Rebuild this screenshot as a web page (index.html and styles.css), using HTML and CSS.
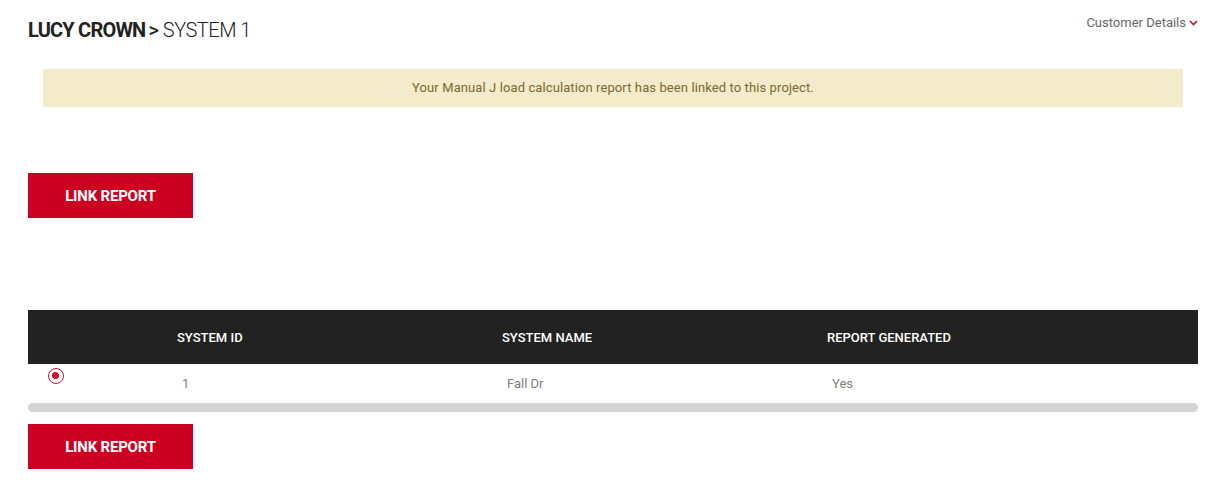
FILE: index.html
```html
<!DOCTYPE html>
<html lang="en">
<head>
    <meta charset="UTF-8">
    <meta name="viewport" content="width=device-width, initial-scale=1.0">
    <title>Lucy Crown - System 1</title>
    <link rel="stylesheet" href="styles.css">
</head>
<body>
    <div class="page">
        <div class="top-bar">
            <h1 class="crumbs"><span class="customer">LUCY CROWN</span><span class="sep">&gt;</span><span class="system">SYSTEM 1</span></h1>
            <a class="customer-link" href="#">Customer Details
                <svg class="chevron" width="9" height="6" viewBox="0 0 9 6"><path d="M1 1l3.5 3.5L8 1" fill="none" stroke="#c8102e" stroke-width="1.6"/></svg>
            </a>
        </div>

        <div class="notice">Your Manual J load calculation report has been linked to this project.</div>

        <button class="btn btn-top" type="button">LINK REPORT</button>

        <div class="table-wrap">
            <table class="systems">
                <thead>
                    <tr>
                        <th class="col-select"></th>
                        <th>SYSTEM ID</th>
                        <th>SYSTEM NAME</th>
                        <th>REPORT GENERATED</th>
                        <th class="col-rest"></th>
                    </tr>
                </thead>
                <tbody>
                    <tr>
                        <td class="col-select"><span class="radio checked"></span></td>
                        <td>1</td>
                        <td>Fall Dr</td>
                        <td>Yes</td>
                        <td class="col-rest"></td>
                    </tr>
                </tbody>
            </table>
            <div class="scroll-track"></div>
        </div>

        <button class="btn btn-bottom" type="button">LINK REPORT</button>
    </div>
</body>
</html>
```

FILE: styles.css
```css
body {
    margin: 0;
    background: #fff;
    font-family: Roboto, "Open Sans", sans-serif;
    color: #333;
}
.page {
    padding: 0 11px 0 28px;
}
.top-bar {
    display: flex;
    justify-content: space-between;
    align-items: flex-start;
    height: 69px;
}
.crumbs {
    margin: 17px 0 0;
    font-size: 20px;
    font-weight: 400;
    color: #222;
    line-height: 26px;
}
.customer {
    font-weight: 700;
    letter-spacing: -0.8px;
}
.sep {
    margin: 0 4px 0 3px;
    font-weight: 500;
}
.system {
    font-weight: 300;
    letter-spacing: -0.5px;
}
.customer-link {
    margin-top: 15px;
    font-size: 13px;
    color: #666;
    text-decoration: none;
    display: flex;
    align-items: center;
    gap: 3px;
}
.notice {
    margin: 0 15px;
    height: 38px;
    line-height: 38px;
    background: #f3ebcc;
    color: #7a6a2d;
    font-size: 13px;
    letter-spacing: 0.1px;
    text-align: center;
}
.btn {
    display: block;
    width: 165px;
    height: 45px;
    border: none;
    background: #cc0020;
    color: #fff;
    font-family: inherit;
    font-size: 15px;
    font-weight: 700;
    letter-spacing: -0.2px;
    cursor: pointer;
}
.btn-top {
    margin-top: 66px;
}
.table-wrap {
    margin-top: 92px;
}
.systems {
    width: 100%;
    border-collapse: collapse;
    table-layout: fixed;
}
.systems th {
    background: #222;
    color: #fff;
    font-size: 13px;
    font-weight: 500;
    text-align: left;
    height: 54px;
    padding: 0 0 0 12px;
    width: 313px;
}
.systems td {
    font-size: 13px;
    color: #808080;
    height: 39px;
    padding: 0 0 0 17px;
    vertical-align: middle;
}
.systems th.col-select,
.systems td.col-select {
    width: 137px;
    padding: 0;
}
.systems th.col-rest {
    width: auto;
}
.radio {
    display: block;
    box-sizing: border-box;
    width: 16px;
    height: 16px;
    margin: -15px 0 0 20px;
    border: 1.5px solid #c8102e;
    border-radius: 50%;
    position: relative;
}
.radio.checked::after {
    content: "";
    position: absolute;
    left: 3px;
    top: 3px;
    width: 7px;
    height: 7px;
    border-radius: 50%;
    background: #c8102e;
}
.scroll-track {
    height: 9px;
    background: #d4d4d4;
    border-radius: 5px;
}
.btn-bottom {
    margin-top: 12px;
}
```
